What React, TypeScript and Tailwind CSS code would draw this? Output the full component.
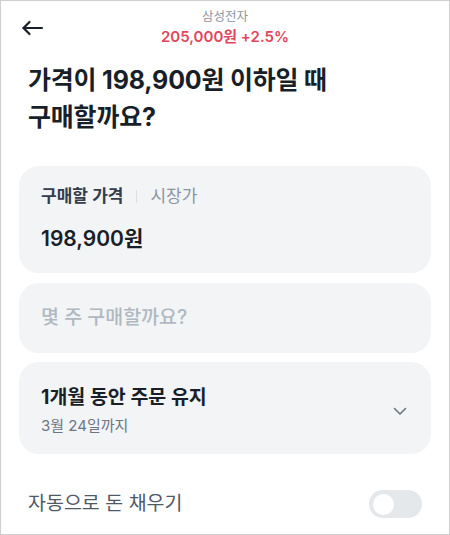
import React from "react";

const font = { fontFamily: '"Inter", "Noto Sans CJK KR", sans-serif' };

export default function App() {
  return (
    <div
      style={font}
      className="w-[450px] h-[535px] overflow-hidden border border-[#cfcfcf] bg-white text-[#191f28]"
    >
      {/* header */}
      <div className="grid grid-cols-[1fr_auto_1fr] items-center pt-[8px]">
        <div className="pl-[19px]">
          <svg width="24" height="24" viewBox="0 0 24 24" fill="none" stroke="#191f28" strokeWidth="2.2" strokeLinecap="round" strokeLinejoin="round">
            <path d="M22 12H3.5" />
            <path d="M9.5 6l-6 6 6 6" />
          </svg>
        </div>
        <div className="flex flex-col items-center">
          <span className="text-[12.5px] leading-[16px] text-[#8b95a1]">삼성전자</span>
          <span className="mt-[2px] text-[15px] leading-[20px] font-semibold text-[#e0475a]">205,000원 +2.5%</span>
        </div>
        <div />
      </div>

      {/* title */}
      <h1 className="ml-[27px] mt-[15px] text-[25px] leading-[37px] font-bold tracking-[-0.2px]">
        가격이 198,900원 이하일 때<br />구매할까요?
      </h1>

      {/* price card */}
      <div className="mx-[18px] mt-[30px] rounded-[20px] bg-[#f2f4f6] px-[22px] pt-[19px] pb-[20px]">
        <div className="flex items-center text-[17px] leading-[22px]">
          <span className="font-semibold text-[#333d4b]">구매할 가격</span>
          <span className="mx-[13px] h-[13px] w-px bg-[#dde1e6]" />
          <span className="text-[#8b95a1]">시장가</span>
        </div>
        <div className="mt-[18px] text-[21px] leading-[28px] font-semibold text-[#191f28]">198,900원</div>
      </div>

      {/* quantity card */}
      <div className="mx-[18px] mt-[10px] flex h-[70px] items-center rounded-[20px] bg-[#f2f4f6] px-[22px]">
        <span className="text-[19.5px] font-medium text-[#b0b8c1]">몇 주 구매할까요?</span>
      </div>

      {/* period card */}
      <div className="mx-[18px] mt-[9px] flex items-center justify-between rounded-[20px] bg-[#f2f4f6] pl-[22px] pr-[23px] pt-[23px] pb-[18px]">
        <div className="flex flex-col">
          <span className="text-[19.5px] leading-[24px] font-bold text-[#191f28]">1개월 동안 주문 유지</span>
          <span className="mt-[7px] text-[15px] leading-[20px] text-[#6b7684]">3월 24일까지</span>
        </div>
        <svg width="16" height="16" viewBox="0 0 16 16" fill="none" stroke="#6b7684" strokeWidth="1.6" strokeLinecap="round" strokeLinejoin="round">
          <path d="M2.5 5.5l5.5 5.5 5.5-5.5" />
        </svg>
      </div>

      {/* auto fill row */}
      <div className="mt-[30px] flex h-[40px] items-center justify-between pl-[27px] pr-[27px]">
        <span className="text-[19.5px] text-[#4e5968]">자동으로 돈 채우기</span>
        <div className="flex h-[28px] w-[53px] items-center rounded-full bg-[#e5e8eb] px-[4px]">
          <span className="h-[21px] w-[21px] rounded-full bg-white" />
        </div>
      </div>
    </div>
  );
}
